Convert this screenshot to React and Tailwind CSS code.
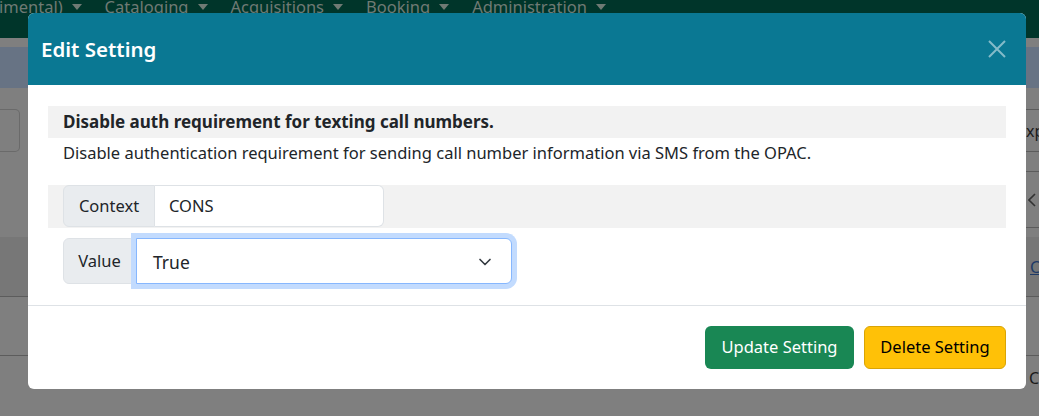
import { ChevronDown } from 'lucide-react'

const font = { fontFamily: '"Noto Sans", "Open Sans", sans-serif' }

const Caret = () => (
  <svg width="10" height="6" viewBox="0 0 10 6" className="ml-[9px] mr-[23px]">
    <path d="M0 0 L10 0 L5 6 Z" fill="#6f7a74" />
  </svg>
)

const NavItem = ({ label }) => (
  <span className="flex items-center">
    {label}
    <Caret />
  </span>
)

const Backdrop = () => (
  <div className="flex flex-col h-full">
    <div className="h-[38px] bg-[#00352a] shrink-0">
      <div className="flex items-center -mt-[4px] text-[16.5px] text-[#6f7a74] leading-[22px] -ml-[1px]">
        <NavItem label="imental)" />
        <NavItem label="Cataloging" />
        <NavItem label="Acquisitions" />
        <NavItem label="Booking" />
        <NavItem label="Administration" />
      </div>
    </div>
    <div className="h-[9px] shrink-0" />
    <div className="h-[41px] bg-[#677384] shrink-0" />
    <div className="h-[21px] shrink-0" />
    <div className="h-[43px] flex justify-between shrink-0">
      <div className="w-[20px] border border-l-0 border-[#6a6a6a] rounded-r-[5px]" />
      <div className="w-[13px] border-y border-[#5c5c5c] flex items-center text-[16px] text-[#1a1a1a] overflow-hidden">xp</div>
    </div>
    <div className="h-[20px] flex justify-end shrink-0">
      <div className="w-[13px] border-b border-[#5c5c5c]" />
    </div>
    <div className="h-[56px] flex justify-end shrink-0">
      <div className="w-[13px] border-b border-[#5c5c5c] flex items-center pl-[2px]">
        <svg width="8" height="14" viewBox="0 0 8 14">
          <path d="M7 1 L1 7 L7 13" stroke="#333" strokeWidth="1.6" fill="none" />
        </svg>
      </div>
    </div>
    <div className="h-[9px] shrink-0" />
    <div className="h-[60px] bg-[#777777] border-b border-[#5c5c5c] flex justify-end items-center shrink-0">
      <span className="w-[13px] text-[16px] text-[#1e3a66] underline pl-[4px] overflow-hidden">C</span>
    </div>
    <div className="h-[59px] border-b border-[#5c5c5c] shrink-0" />
    <div className="flex justify-end pt-[10px]">
      <span className="w-[13px] text-[16px] text-[#1a1a1a] pl-[3px] overflow-hidden">C</span>
    </div>
  </div>
)

export default function App() {
  return (
    <div className="relative w-[1039px] h-[416px] overflow-hidden bg-[#7f7f7f]" style={font}>
      <Backdrop />

      <div className="absolute left-[28px] top-[13px] w-[998px] bg-white rounded-[6px] overflow-hidden text-[#212529]">
        <div className="h-[72px] bg-[#0a7893] flex items-center justify-between pl-[13px] pr-[20px]">
          <h5 className="text-[20.5px] font-semibold text-white">Edit Setting</h5>
          <svg width="18" height="18" viewBox="0 0 18 18">
            <path d="M1 1 L17 17 M17 1 L1 17" stroke="#84bbc9" strokeWidth="2" />
          </svg>
        </div>

        <div className="pt-[21px] px-[20px] pb-[21px]">
          <div className="h-[32px] bg-[#f2f2f2] px-[15px] flex items-center font-bold text-[17px]">
            Disable auth requirement for texting call numbers.
          </div>
          <div className="h-[30px] px-[15px] flex items-center text-[16.5px]">
            Disable authentication requirement for sending call number information via SMS from the OPAC.
          </div>
          <div className="mt-[17px] h-[43px] bg-[#f2f2f2] pl-[15px]">
            <div className="flex h-[42px] text-[16.5px]">
              <span className="w-[92px] flex items-center justify-center bg-[#e9ecef] border border-[#dee2e6] rounded-l-[6px]">
                Context
              </span>
              <span className="w-[229px] flex items-center px-[14px] bg-white border border-l-0 border-[#dee2e6] rounded-r-[6px]">
                CONS
              </span>
            </div>
          </div>
          <div className="mt-[10px] h-[46px] pl-[15px] flex">
            <span className="w-[73px] flex items-center justify-center bg-[#e9ecef] border border-[#dee2e6] rounded-l-[6px] text-[16.5px]">
              Value
            </span>
            <div className="w-[376px] flex items-center justify-between pl-[16px] pr-[16px] pt-[2px] bg-white border border-[#86b7fe] rounded-r-[6px] ring-[5px] ring-[#c2dbfe] text-[17.5px]">
              <span>True</span>
              <ChevronDown className="w-[20px] h-[20px] text-[#343a40]" strokeWidth={2} />
            </div>
          </div>
        </div>

        <div className="h-[84px] border-t border-[#dee2e6] flex items-center justify-end gap-[10px] px-[20px]">
          <button className="h-[43px] w-[149px] rounded-[6px] bg-[#198754] text-white text-[16.5px]">
            Update Setting
          </button>
          <button className="h-[43px] w-[142px] rounded-[6px] bg-[#ffc107] border border-[#d9a406] text-black text-[16.5px]">
            Delete Setting
          </button>
        </div>
      </div>
    </div>
  )
}
